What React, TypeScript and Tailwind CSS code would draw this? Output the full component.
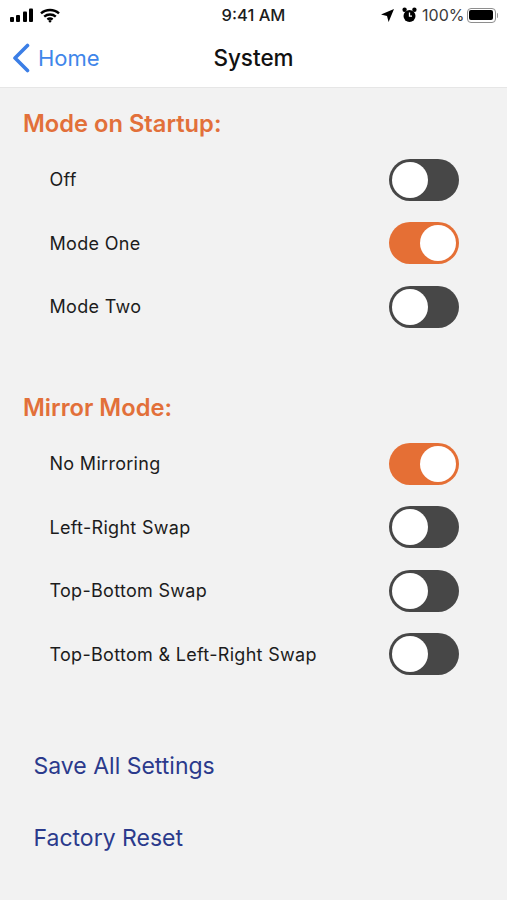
const font = { fontFamily: "Inter, sans-serif" };

function Toggle({ on }: { on?: boolean }) {
  return (
    <div
      className={`flex h-[42px] w-[70px] items-center rounded-full p-[3px] ${
        on ? "justify-end bg-[#e56f35]" : "justify-start bg-[#474747]"
      }`}
    >
      <div className="h-[36px] w-[36px] rounded-full bg-white" />
    </div>
  );
}

function Row({ label, on }: { label: string; on?: boolean }) {
  return (
    <div className="flex h-[63.5px] items-center justify-between pl-[49.5px] pr-[48px]">
      <span className="text-[18px] tracking-[0.3px] text-[#1c1c1c]">{label}</span>
      <Toggle on={on} />
    </div>
  );
}

function Section({ title, rows }: { title: string; rows: { label: string; on?: boolean }[] }) {
  return (
    <section>
      <h2 className="h-[40px] pl-[23px] text-[23.7px] leading-[42px] font-semibold text-[#e2703a]">{title}</h2>
      <div className="mt-[5px]">
        {rows.map((r) => (
          <Row key={r.label} label={r.label} on={r.on} />
        ))}
      </div>
    </section>
  );
}

function StatusLeft() {
  return (
    <div className="flex items-center gap-[6px]">
      <svg width="24" height="14" viewBox="0 0 24 14" fill="#000">
        <rect x="0" y="9" width="4" height="5" rx="1" />
        <rect x="6" y="7" width="4" height="7" rx="1" />
        <rect x="13" y="3.5" width="4" height="10.5" rx="1" />
        <rect x="19" y="0.5" width="4" height="13.5" rx="1" />
      </svg>
      <svg width="20" height="15" viewBox="0 0 20 15" fill="none" stroke="#000" strokeWidth="2.4">
        <path d="M1 5.4C6 .8 14 .8 19 5.4" />
        <path d="M4.2 8.6c3.3-2.9 8.3-2.9 11.6 0" />
        <path d="M7.4 11.5c1.5-1.2 3.7-1.2 5.2 0" />
        <circle cx="10" cy="13.2" r="1.2" fill="#000" stroke="none" />
      </svg>
    </div>
  );
}

function StatusRight() {
  return (
    <div className="flex items-center">
      <svg width="15" height="15" viewBox="0 0 15 15" fill="#000" className="mr-[7px]">
        <path d="M14 1 L8.6 14 L7 8 L1 6.4 Z" />
      </svg>
      <svg width="15" height="16" viewBox="0 0 15 16" fill="#000" className="mr-[5px]">
        <circle cx="7.5" cy="9" r="6" />
        <circle cx="2.6" cy="2.8" r="2.2" />
        <circle cx="12.4" cy="2.8" r="2.2" />
        <path d="M7.5 5.5V9.2H10" stroke="#fff" strokeWidth="1.3" fill="none" />
      </svg>
      <span className="text-[16px] text-[#3a3a3a]">100%</span>
      <div className="ml-[2px] flex items-center">
        <div className="h-[15px] w-[29px] rounded-[4px] border border-[#8e8e8e] p-[1.5px]">
          <div className="h-full w-full rounded-[2px] bg-black" />
        </div>
        <div className="ml-px h-[5px] w-[1.5px] rounded-r bg-[#9a9a9a]" />
      </div>
    </div>
  );
}

export default function App() {
  return (
    <div style={font} className="flex h-[900px] w-[507px] flex-col overflow-hidden bg-[#f2f2f2]">
      <header className="h-[88px] shrink-0 border-b border-[#e6e6e6] bg-white">
        <div className="relative flex h-[30px] items-center justify-between pl-[10px] pr-[9px]">
          <StatusLeft />
          <span className="absolute inset-x-0 text-center text-[16.5px] font-medium text-[#1c1c1c]">9:41 AM</span>
          <StatusRight />
        </div>
        <div className="relative flex h-[56px] items-center pl-[12px]">
          <svg width="18" height="30" viewBox="0 0 18 30" fill="none" stroke="#3b7ee6" strokeWidth="3.6" strokeLinecap="round" strokeLinejoin="round">
            <path d="M15.5 2.5 3 15 15.5 27.5" />
          </svg>
          <span className="ml-[8px] text-[22px] text-[#3f86ea]">Home</span>
          <span className="absolute inset-x-0 text-center text-[22.5px] font-medium text-[#111]">System</span>
        </div>
      </header>
      <main className="flex flex-1 flex-col pt-[15px]">
        <Section
          title="Mode on Startup:"
          rows={[{ label: "Off" }, { label: "Mode One", on: true }, { label: "Mode Two" }]}
        />
        <div className="mt-[48.5px]">
          <Section
            title="Mirror Mode:"
            rows={[
              { label: "No Mirroring", on: true },
              { label: "Left-Right Swap" },
              { label: "Top-Bottom Swap" },
              { label: "Top-Bottom & Left-Right Swap" },
            ]}
          />
        </div>
        <div className="mt-[61.5px] flex flex-col gap-[36px] pl-[33.5px] text-[23px] leading-[36px] text-[#2b3a8c]">
          <span>Save All Settings</span>
          <span>Factory Reset</span>
        </div>
      </main>
    </div>
  );
}
